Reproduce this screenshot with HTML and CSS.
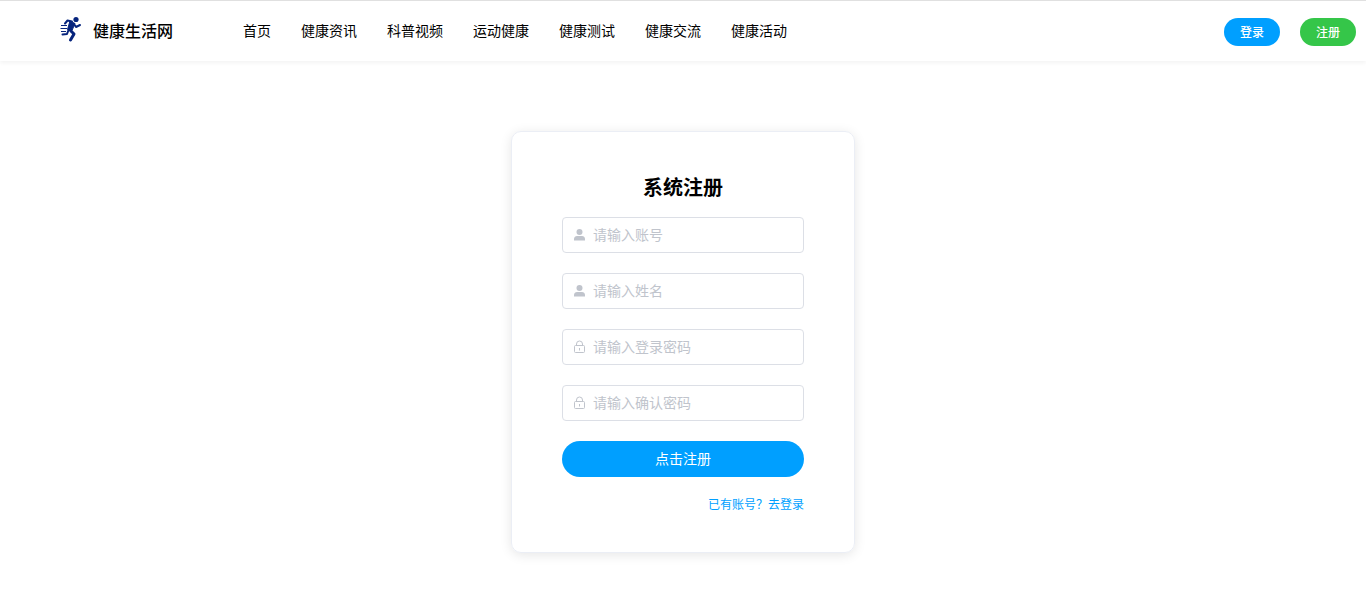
FILE: index.html
```html
<!DOCTYPE html>
<html lang="zh-CN">
<head>
<meta charset="utf-8">
<meta name="viewport" content="width=device-width, initial-scale=1">
<title>健康生活网</title>
<link rel="stylesheet" href="styles.css">
</head>
<body>
<svg class="sprite" aria-hidden="true">
  <symbol id="icon-user" viewBox="0 0 14 14">
    <circle cx="6.500" cy="4" r="3"/>
    <path d="M1 12.500V11C1 9 2.500 8 4 8H9C10.500 8 12 9 12 11V12.500Z"/>
  </symbol>
  <symbol id="icon-lock" viewBox="0 0 14 14">
    <path d="M2.500 5.500H10.500Q11.500 5.500 11.500 6.500V11.500Q11.500 12.500 10.500 12.500H2.500Q1.500 12.500 1.500 11.500V6.500Q1.500 5.500 2.500 5.500ZM3.500 5.500V4A3 3 0 0 1 9.500 4V5.500M6.500 8V10.500" fill="none" stroke="currentColor"/>
  </symbol>
</svg>
<header class="header">
  <a class="brand" href="#">
    <svg class="brand-logo" viewBox="0 0 24 28" aria-hidden="true">
      <circle cx="17" cy="4.500" r="2.600" fill="currentColor"/>
      <path d="M6 8.500L8.500 5.500L13 6.500" class="limb"/>
      <path d="M11 6L16 8.500L13 15.500L8.500 14.500Z" class="torso"/>
      <path d="M15 9L17 12L21 10" class="limb"/>
      <path d="M11.500 15.500L15 19L11.500 25" class="limb leg"/>
      <path d="M9.500 15L8 19L3.500 19.500" class="limb"/>
      <path d="M2 10.500H8M1.500 13.500H8M2 16.500H7" class="speed"/>
    </svg>
    <span>健康生活网</span>
  </a>
  <nav class="nav" aria-label="主导航">
    <a href="#">首页</a>
    <a href="#">健康资讯</a>
    <a href="#">科普视频</a>
    <a href="#">运动健康</a>
    <a href="#">健康测试</a>
    <a href="#">健康交流</a>
    <a href="#">健康活动</a>
  </nav>
  <div class="actions">
    <button class="pill" type="button">登录</button>
    <button class="pill pill-green" type="button">注册</button>
  </div>
</header>
<main class="main">
  <form class="card">
    <h1 class="title">系统注册</h1>
    <label class="field"><svg class="icon" aria-hidden="true"><use href="#icon-user"/></svg><input class="input" type="text" placeholder="请输入账号" aria-label="账号"></label>
    <label class="field"><svg class="icon" aria-hidden="true"><use href="#icon-user"/></svg><input class="input" type="text" placeholder="请输入姓名" aria-label="姓名"></label>
    <label class="field"><svg class="icon" aria-hidden="true"><use href="#icon-lock"/></svg><input class="input" type="password" placeholder="请输入登录密码" aria-label="登录密码"></label>
    <label class="field"><svg class="icon" aria-hidden="true"><use href="#icon-lock"/></svg><input class="input" type="password" placeholder="请输入确认密码" aria-label="确认密码"></label>
    <button class="submit" type="button">点击注册</button>
    <a class="login-link" href="#">已有账号？去登录</a>
  </form>
</main>
</body>
</html>
```
FILE: styles.css
```css
* { box-sizing: border-box; }

body {
  margin: 0;
  color: #000;
  background: #fff;
  font: 14px/20px "Noto Sans CJK SC", sans-serif;
}

a { color: inherit; text-decoration: none; }
button { border: 0; color: #fff; font-family: inherit; cursor: pointer; }
.sprite { display: none; }

.header {
  display: flex;
  align-items: center;
  height: 61px;
  padding: 0 10px 2px 59px;
  border-top: 1px solid #e0e0e0;
  box-shadow: 0 2px 4px rgba(0, 0, 0, 0.05);
}

.brand {
  display: flex;
  align-items: center;
  gap: 10px;
  font-size: 16px;
  font-weight: 500;
}

.brand-logo { width: 24px; height: 28px; margin-bottom: 2px; color: #06247d; }
.limb { fill: none; stroke: currentColor; stroke-width: 2; stroke-linejoin: round; stroke-linecap: round; }
.leg { stroke-width: 3; }
.torso { fill: currentColor; stroke: currentColor; stroke-linejoin: round; }
.speed { stroke: currentColor; stroke-width: 1; }

.nav { display: flex; gap: 30px; margin-left: 70px; white-space: nowrap; }

.actions { display: flex; gap: 20px; margin: 4px 0 0 auto; }

.pill {
  height: 28px;
  padding: 0 16px 2px;
  border-radius: 14px;
  background: #009fff;
  font-size: 12px;
  font-weight: 500;
}

.pill-green { background: #35c649; }

.main { display: flex; justify-content: center; padding: 70px 20px 55px; }

.card {
  display: flex;
  flex-direction: column;
  gap: 20px;
  width: 344px;
  padding: 40px 50px 39px;
  border: 1px solid #ebeef5;
  border-radius: 10px;
  box-shadow: 0 2px 12px rgba(0, 0, 0, 0.1);
}

.title {
  margin: 0 0 -5px;
  font-size: 20px;
  line-height: 30px;
  font-weight: 700;
  text-align: center;
}

.field {
  display: flex;
  align-items: center;
  gap: 6px;
  height: 36px;
  padding: 0 10px;
  border: 1px solid #dcdfe6;
  border-radius: 4px;
}

.icon { flex: none; width: 14px; height: 14px; color: #c0c4cc; fill: currentColor; }

.input {
  flex: 1;
  min-width: 0;
  padding: 0 0 2px;
  border: 0;
  outline: 0;
  background: none;
  font: inherit;
}

.input::placeholder { color: #c0c4cc; }

.submit {
  height: 36px;
  padding: 0 0 2px;
  border-radius: 18px;
  background: #009fff;
  font-size: 14px;
}

.login-link {
  align-self: flex-end;
  padding-bottom: 2px;
  color: #009fff;
  font-size: 12px;
  line-height: 14px;
}
```
